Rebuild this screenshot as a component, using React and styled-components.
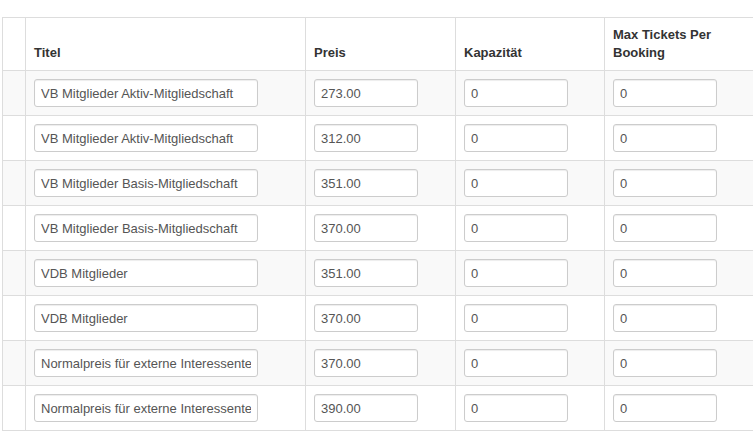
import React from "react";
import styled, { createGlobalStyle } from "styled-components";

const Global = createGlobalStyle`
  html, body { margin: 0; padding: 0; background: #fff; overflow: hidden; }
  body { font-family: "Liberation Sans", Arial, sans-serif; font-size: 13px; line-height: 1.42857; color: #333; }
`;

const Wrap = styled.div`
  padding: 17px 0 0 2px;
  width: 900px;
`;

const Table = styled.table`
  border-collapse: collapse;
  border-spacing: 0;
  table-layout: fixed;
  width: 753px;
  border: 1px solid #ddd;
`;

const Th = styled.th`
  text-align: left;
  vertical-align: bottom;
  font-weight: bold;
  padding: 8px;
  border: 1px solid #ddd;
  line-height: 18px;
  height: 36px;
`;

const Tr = styled.tr`
  background: ${(p) => (p.$striped ? "#f9f9f9" : "#fff")};
`;

const Td = styled.td`
  padding: 8px;
  border: 1px solid #ddd;
  vertical-align: top;
  line-height: 18px;
  height: 28px;
`;

const Input = styled.input`
  display: block;
  box-sizing: border-box;
  width: ${(p) => p.$w}px;
  height: 28px;
  padding: 4px 6px;
  margin: 0;
  font-family: "Liberation Sans", Arial, sans-serif;
  font-size: 13px;
  color: #555;
  background: #fff;
  border: 1px solid #ccc;
  border-radius: 3px;
  box-shadow: inset 0 1px 1px rgba(0, 0, 0, 0.075);
  outline: none;
`;

const rows = [
  ["VB Mitglieder Aktiv-Mitgliedschaft", "273.00"],
  ["VB Mitglieder Aktiv-Mitgliedschaft", "312.00"],
  ["VB Mitglieder Basis-Mitgliedschaft", "351.00"],
  ["VB Mitglieder Basis-Mitgliedschaft", "370.00"],
  ["VDB Mitglieder", "351.00"],
  ["VDB Mitglieder", "370.00"],
  ["Normalpreis für externe Interessente", "370.00"],
  ["Normalpreis für externe Interessente", "390.00"],
];

export default function App() {
  return (
    <>
      <Global />
      <Wrap>
        <Table>
          <colgroup>
            <col style={{ width: 23 }} />
            <col style={{ width: 280 }} />
            <col style={{ width: 150 }} />
            <col style={{ width: 149 }} />
            <col style={{ width: 151 }} />
          </colgroup>
          <thead>
            <tr>
              <Th></Th>
              <Th>Titel</Th>
              <Th>Preis</Th>
              <Th>Kapazität</Th>
              <Th>Max Tickets Per Booking</Th>
            </tr>
          </thead>
          <tbody>
            {rows.map(([title, price], i) => (
              <Tr key={i} $striped={i % 2 === 0}>
                <Td></Td>
                <Td>
                  <Input $w={224} defaultValue={title} />
                </Td>
                <Td>
                  <Input $w={104} defaultValue={price} />
                </Td>
                <Td>
                  <Input $w={104} defaultValue="0" />
                </Td>
                <Td>
                  <Input $w={104} defaultValue="0" />
                </Td>
              </Tr>
            ))}
          </tbody>
        </Table>
      </Wrap>
    </>
  );
}
